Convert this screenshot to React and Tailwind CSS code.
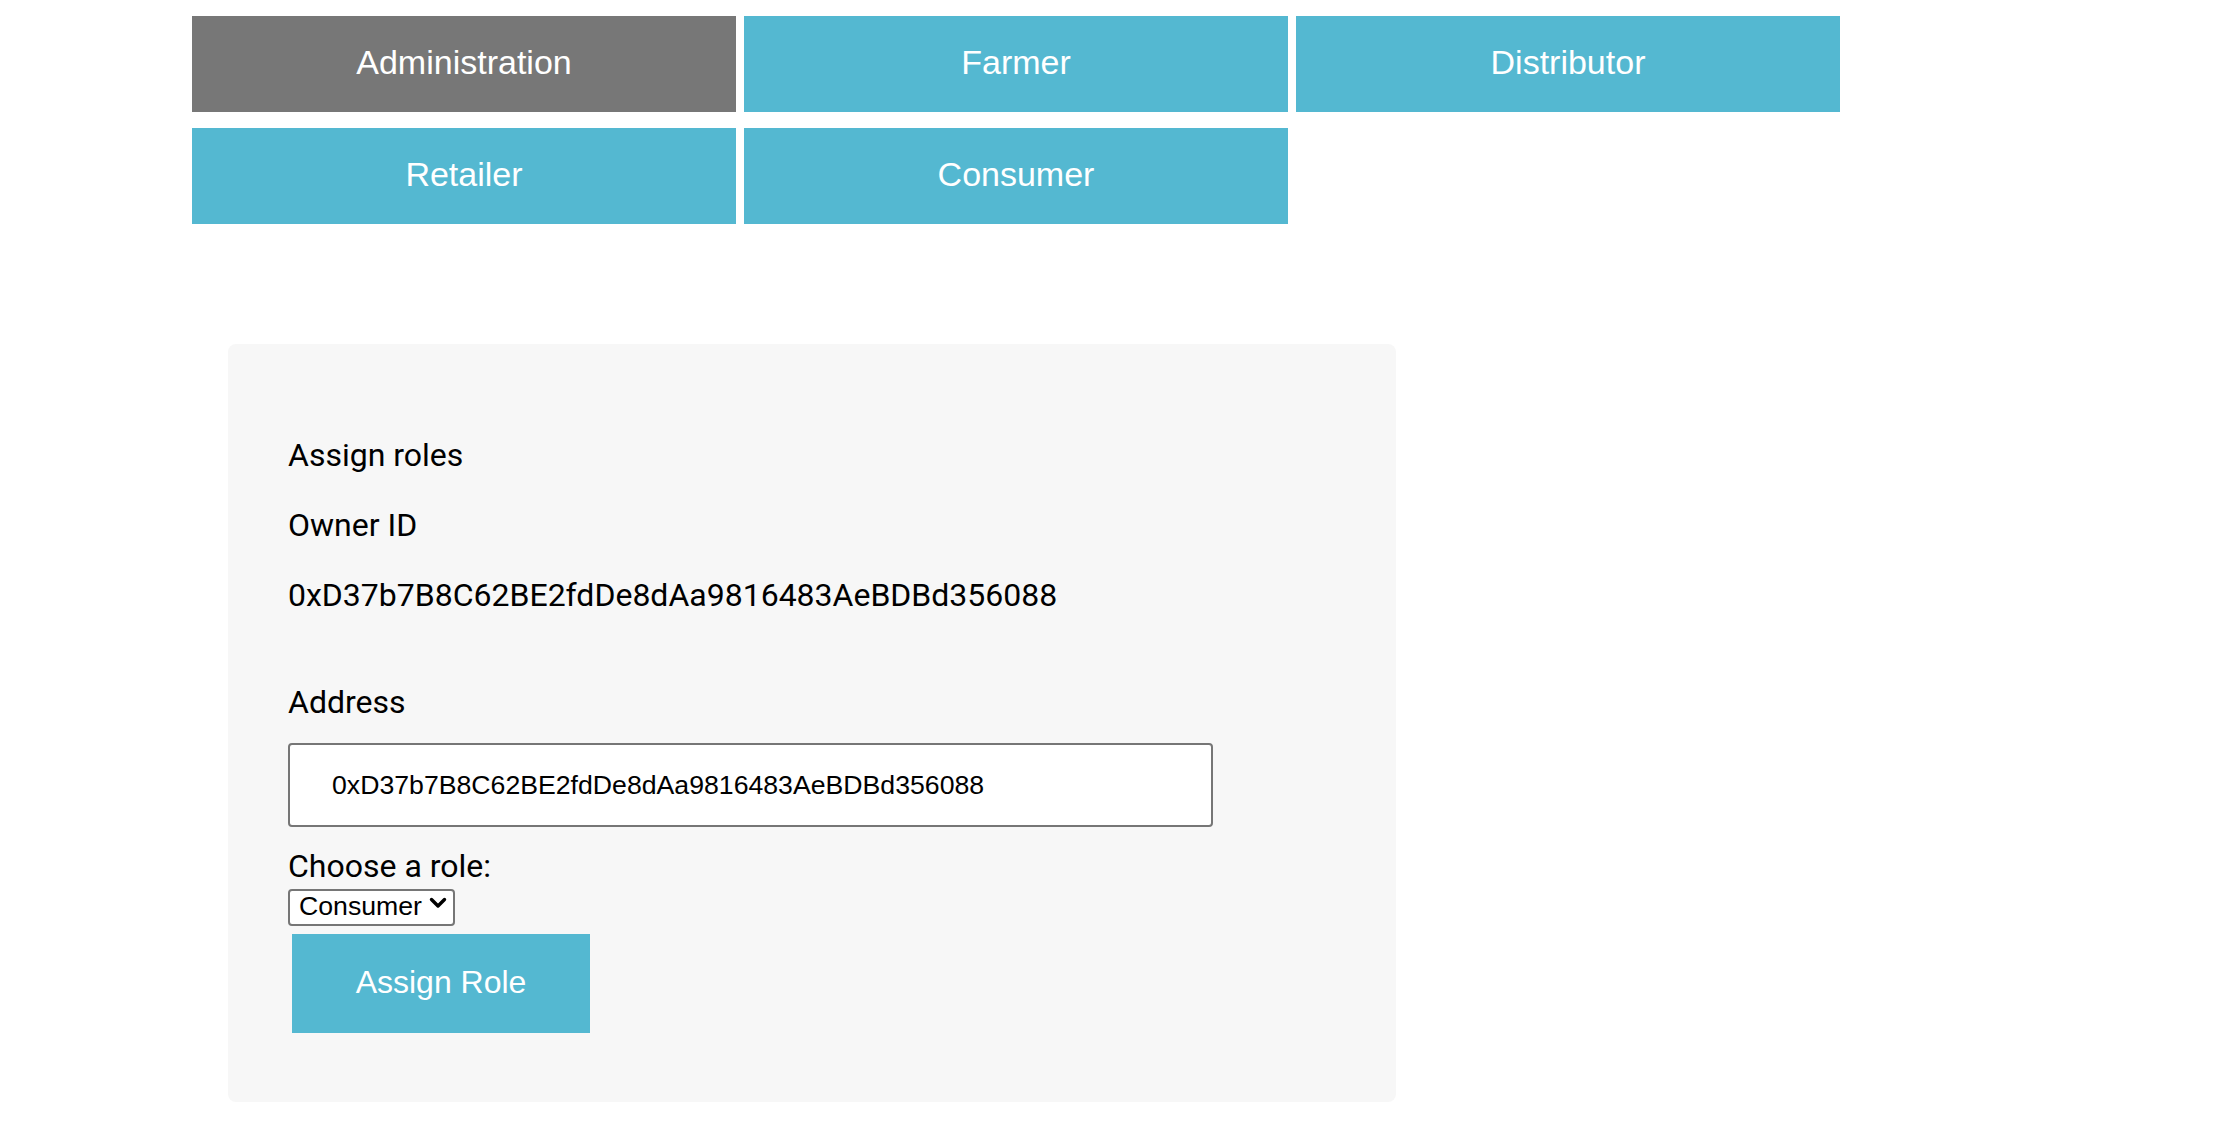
import { useState } from 'react';

const tabs = ['Administration', 'Farmer', 'Distributor', 'Retailer', 'Consumer'];

function App() {
  const [active, setActive] = useState('Administration');
  const [address, setAddress] = useState('0xD37b7B8C62BE2fdDe8dAa9816483AeBDBd356088');
  const [role, setRole] = useState('Consumer');

  return (
    <div className="min-h-screen bg-white font-['Roboto',sans-serif] text-black">
      {/* Role tabs */}
      <div className="pl-[192px] pt-[16px] w-[1840px] flex flex-wrap gap-x-[8px] gap-y-[16px]">
        {tabs.map((tab) => (
          <button
            key={tab}
            onClick={() => setActive(tab)}
            className={`w-[544px] h-[96px] flex items-center justify-center pb-[4px] text-white text-[34px] font-['Liberation_Sans',Arial,sans-serif] ${
              active === tab ? 'bg-[#777777]' : 'bg-[#54b8d1]'
            }`}
          >
            {tab}
          </button>
        ))}
      </div>

      {/* Assign roles panel */}
      <div className="ml-[228px] mt-[120px] w-[1168px] h-[758px] bg-[#f7f7f7] rounded-[8px] pl-[60px] pt-[92px] text-[32px] leading-[38px]">
        <p>Assign roles</p>
        <p className="mt-[32px]">Owner ID</p>
        <p className="mt-[32px]">{address}</p>

        <p className="mt-[69px]">Address</p>
        <input
          type="text"
          value={address}
          onChange={(e) => setAddress(e.target.value)}
          className="mt-[22px] block w-[925px] h-[84px] bg-white border-2 border-[#767676] rounded-[4px] pl-[42px] text-[26.67px] font-['Liberation_Sans',Arial,sans-serif] outline-none"
        />

        <p className="mt-[20px]">Choose a role:</p>
        <div className="relative mt-0 w-[167px] h-[37px]">
          <select
            value={role}
            onChange={(e) => setRole(e.target.value)}
            className="appearance-none w-full h-full bg-white border-2 border-[#767676] rounded-[4px] pl-[9px] pb-[2px] text-[26.67px] leading-[31px] font-['Liberation_Sans',Arial,sans-serif] outline-none"
          >
            <option>Farmer</option>
            <option>Distributor</option>
            <option>Retailer</option>
            <option>Consumer</option>
          </select>
          <svg className="absolute right-[8px] top-[12px] pointer-events-none" width="18" height="12" viewBox="0 0 18 12">
            <path d="M2.5 2.5 L9 9 L15.5 2.5" fill="none" stroke="#000" strokeWidth="3.4" strokeLinecap="round" strokeLinejoin="round" />
          </svg>
        </div>

        <button className="mt-[12px] ml-[4px] w-[298px] h-[99px] bg-[#54b8d1] text-white text-[32px] font-['Liberation_Sans',Arial,sans-serif] pb-[4px]">
          Assign Role
        </button>
      </div>
    </div>
  );
}

export default App;
